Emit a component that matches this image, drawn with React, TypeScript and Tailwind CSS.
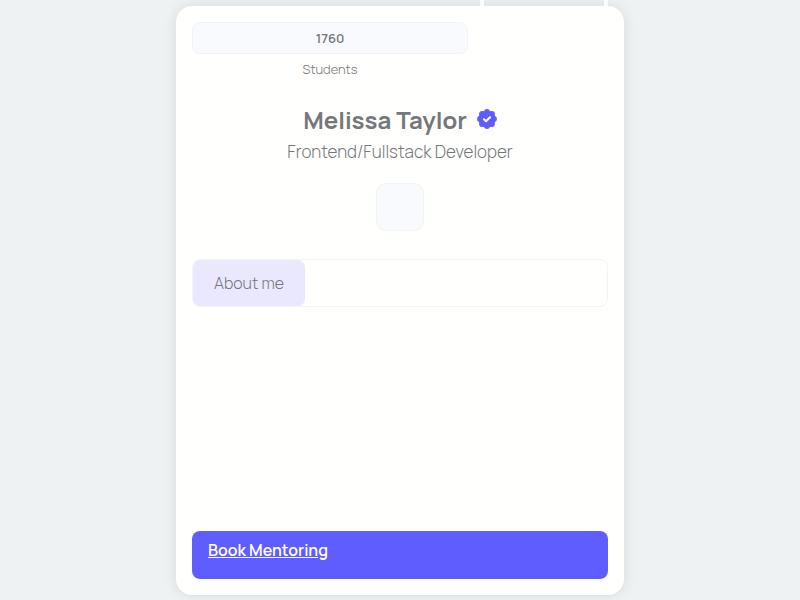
function VerifiedBadge() {
  return (
    <svg viewBox="0 0 20 20" className="size-5" role="img" aria-label="Verified">
      <g fill="#605dff">
        <circle cx="10" cy="10" r="8.6" />
        <circle cx="10" cy="3" r="2.9" />
        <circle cx="15" cy="5" r="2.9" />
        <circle cx="17" cy="10" r="2.9" />
        <circle cx="15" cy="15" r="2.9" />
        <circle cx="10" cy="17" r="2.9" />
        <circle cx="5" cy="15" r="2.9" />
        <circle cx="3" cy="10" r="2.9" />
        <circle cx="5" cy="5" r="2.9" />
      </g>
      <path d="M7 10.200l2 2 4-4" fill="none" stroke="white" strokeWidth="2" strokeLinecap="round" strokeLinejoin="round" />
    </svg>
  );
}

export default function App() {
  return (
    <div className="flex min-h-screen justify-center bg-[#eef2f3] px-4 pt-1.5 pb-[5px] font-['Manrope','Inter',sans-serif] font-light text-[#75777b]">
      <main className="relative flex w-full max-w-md flex-col rounded-2xl bg-[#fffffd] p-4 shadow-[0_0_14px_rgba(0,0,0,0.10)]">
        <div className="absolute -top-1.5 right-4 h-1.5 w-32 border-x-4 border-white" />
        <div className="grid grid-cols-3 gap-1">
          <div className="col-span-2 text-center text-[13px] leading-5">
            <div className="flex h-8 items-center justify-center rounded-lg border border-[#f1f4f4] bg-[#f9fafd] font-semibold">1760</div>
            <div className="pt-[5px]">Students</div>
          </div>
        </div>
        <header className="pt-6 text-center">
          <h1 className="flex items-center justify-center gap-2.5 text-2xl leading-[34px] font-bold">
            Melissa Taylor
            <span className="pb-0.5"><VerifiedBadge /></span>
          </h1>
          <p className="pt-[3px] text-[17px] leading-6">Frontend/Fullstack Developer</p>
        </header>
        <div className="mx-auto mt-[19px] size-12 rounded-[10px] border border-[#f1f4f4] bg-[#f9fafd]" />
        <div className="mt-7 flex h-12 rounded-lg border border-[#f4f4f4]">
          <button className="rounded-[7px] bg-[#eae8ff] px-[21px]">About me</button>
        </div>
        <a href="#book" className="mt-auto h-12 rounded-lg bg-[#605dff] px-4 pt-[7px] font-semibold text-white underline">Book Mentoring</a>
      </main>
    </div>
  );
}
